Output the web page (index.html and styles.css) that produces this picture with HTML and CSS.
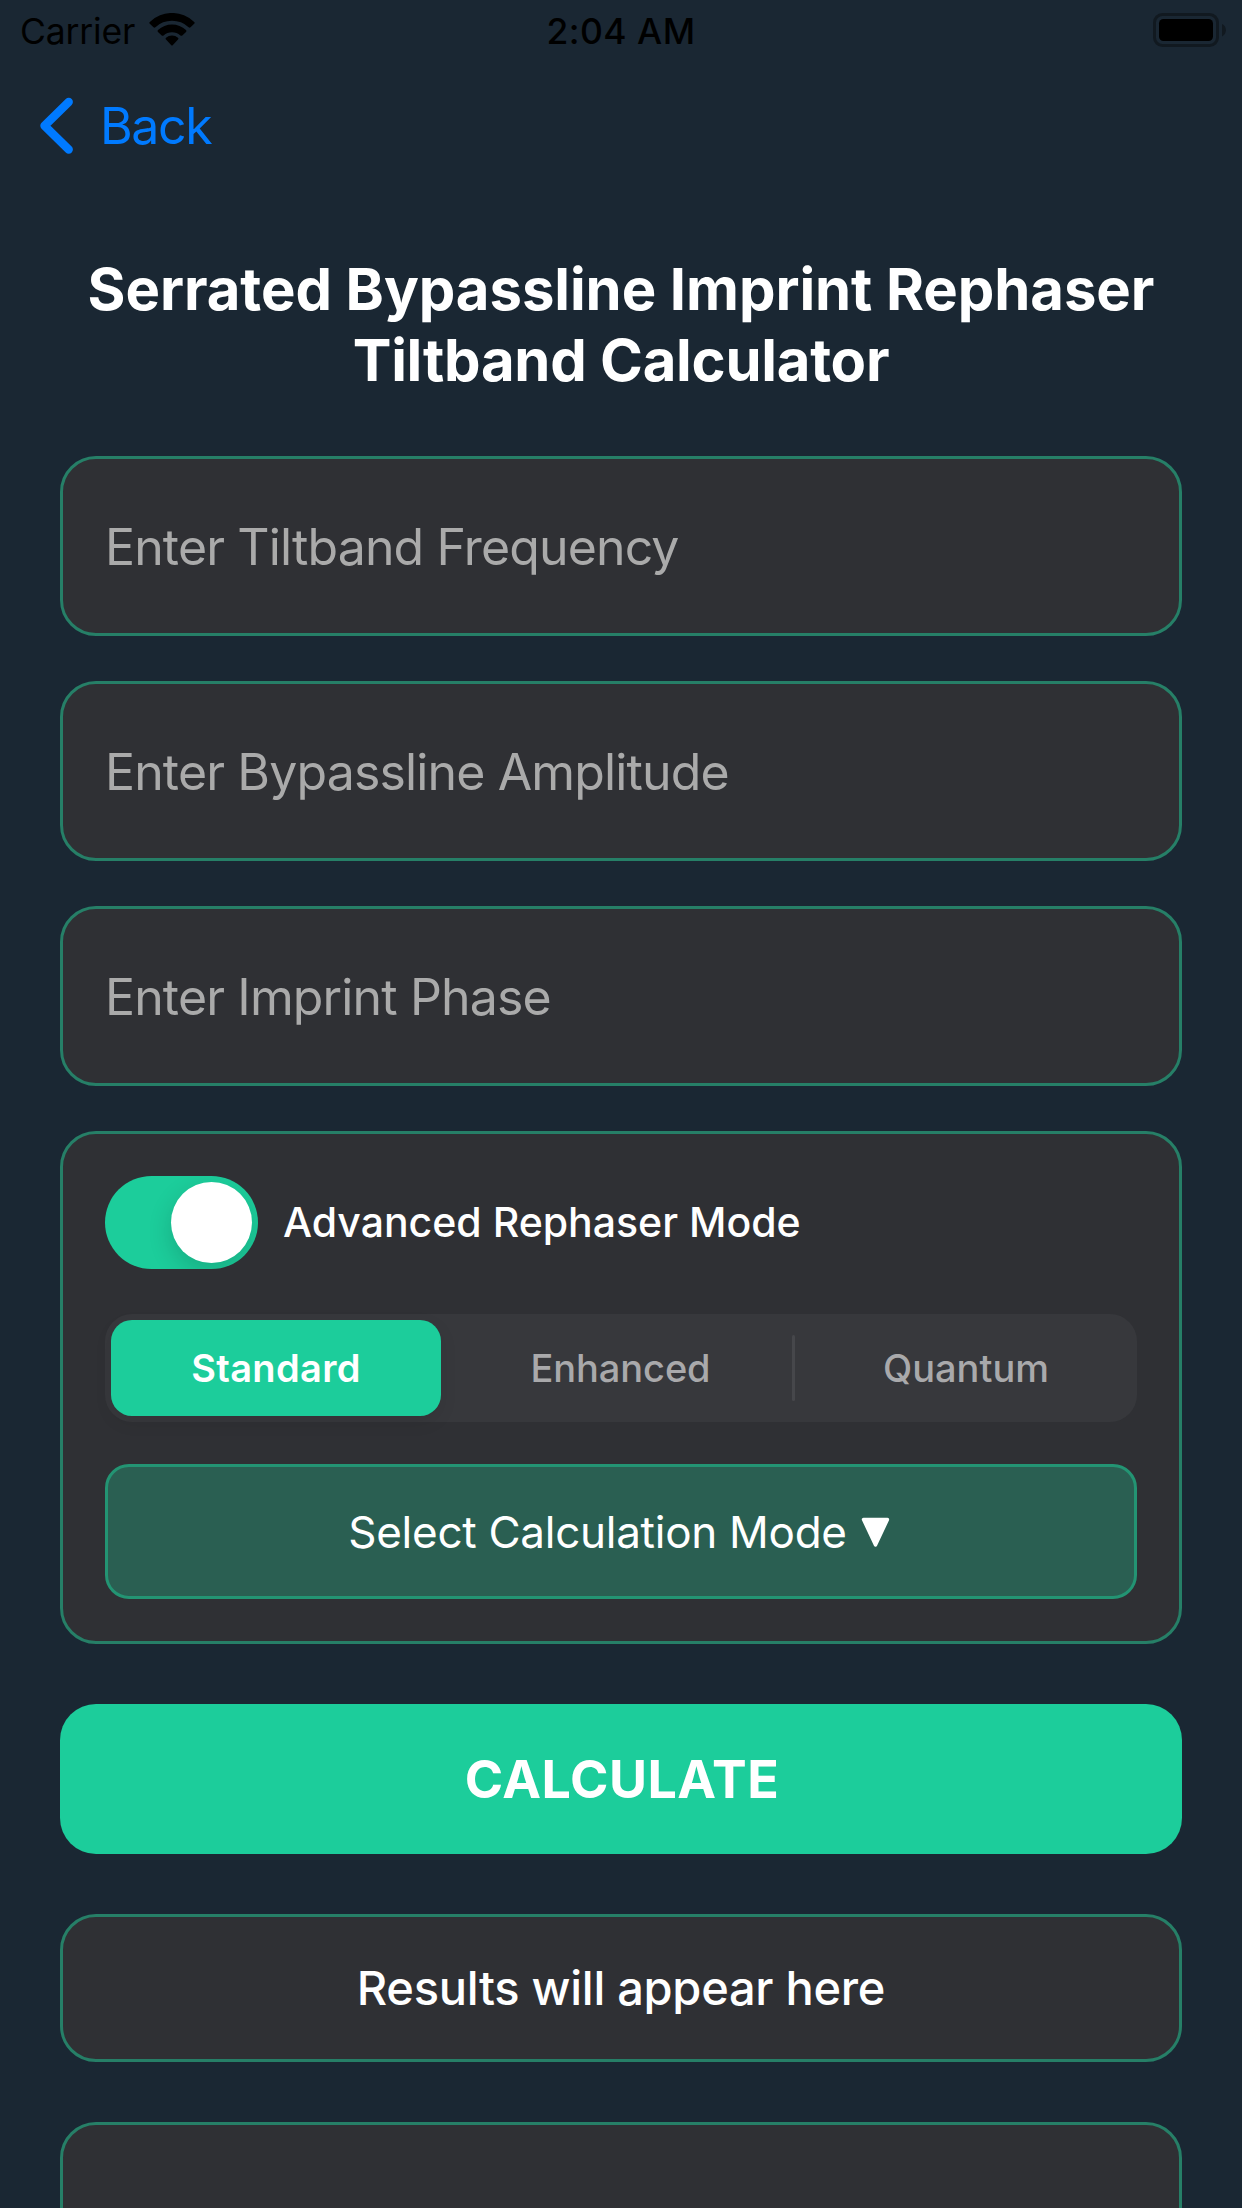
FILE: index.html
```html
<!DOCTYPE html>
<html lang="en">
<head>
<meta charset="utf-8">
<title>Tiltband Calculator</title>
<link rel="stylesheet" href="styles.css">
</head>
<body>
<div class="screen">
  <header class="status-bar">
    <div class="status-left">
      <span class="carrier">Carrier</span>
      <svg class="wifi" width="46" height="34" viewBox="0 0 46 34">
        <path d="M0.8 10.8a1.3 1.3 0 0 1 0-1.9A32 32 0 0 1 45.2 8.900a1.300 1.300 0 0 1 0 1.900L41.500 14.300a1.400 1.400 0 0 1-1.900 0A24 24 0 0 0 6.400 14.300a1.400 1.400 0 0 1-1.900 0Z"/>
        <path d="M9 18.900a1.300 1.300 0 0 1 0-1.900A20.500 20.500 0 0 1 37 17a1.300 1.300 0 0 1 0 1.900L33.300 22.400a1.400 1.400 0 0 1-1.900 0A12.500 12.500 0 0 0 14.600 22.400a1.400 1.400 0 0 1-1.900 0Z"/>
        <path d="M17 26.600a1.200 1.200 0 0 1 0-1.800A9 9 0 0 1 29 24.800a1.200 1.200 0 0 1 0 1.800L23.700 32.200a1 1 0 0 1-1.400 0Z"/>
      </svg>
    </div>
    <span class="clock">2:04 AM</span>
    <svg class="battery" width="74" height="34" viewBox="0 0 74 34">
      <rect x="1.500" y="1.500" width="63" height="31" rx="8" fill="none" stroke="#111920" stroke-width="3"/>
      <rect x="6" y="6" width="54" height="22" rx="4.500"/>
      <path d="M69 11c5.200 2.400 5.200 10 0 12.400Z" fill="#111920"/>
    </svg>
  </header>

  <nav class="nav">
    <svg class="chevron" width="34" height="58" viewBox="0 0 34 58">
      <path d="M28.700 5 4.500 28.800 28.700 52.600" fill="none" stroke="#007aff" stroke-width="8.400" stroke-linecap="round" stroke-linejoin="round"/>
    </svg>
    <span class="back">Back</span>
  </nav>

  <main class="content">
    <h1 class="title">Serrated Bypassline Imprint Rephaser<br><span class="title-tail">Tiltband Calculator</span></h1>

    <div class="fields">
      <div class="card field">Enter Tiltband Frequency</div>
      <div class="card field">Enter Bypassline Amplitude</div>
      <div class="card field">Enter Imprint Phase</div>
    </div>

    <section class="card options">
      <div class="mode-row">
        <span class="switch"><span class="knob"></span></span>
        <span class="mode-label">Advanced Rephaser Mode</span>
      </div>
      <div class="segments">
        <span class="segment selected">Standard</span>
        <span class="segment middle">Enhanced</span>
        <span class="divider"></span>
        <span class="segment">Quantum</span>
      </div>
      <div class="select">
        <span>Select Calculation Mode</span>
        <svg width="29" height="30" viewBox="0 0 29 30">
          <path d="M2.500 2.500H26.500L14.500 28Z" fill="#fff" stroke="#fff" stroke-width="3.400" stroke-linejoin="round"/>
        </svg>
      </div>
    </section>

    <div class="calculate">CALCULATE</div>
    <div class="card results">Results will appear here</div>
    <div class="card history"></div>
  </main>
</div>
</body>
</html>
```
FILE: styles.css
```css
* {
  box-sizing: border-box;
}

body {
  margin: 0;
  background: #1a2733;
  font-family: Inter, "Liberation Sans", sans-serif;
  color: #fff;
}

svg {
  display: block;
  flex: none;
}

.screen {
  width: 1242px;
  height: 2208px;
  overflow: hidden;
}

.status-bar {
  display: grid;
  grid-template-columns: 1fr auto 1fr;
  align-items: center;
  height: 62px;
  padding: 0 15px 0 20px;
  color: #000;
  font-size: 35.5px;
}

.status-left {
  display: flex;
  align-items: center;
  gap: 14px;
}

.carrier {
  letter-spacing: -0.17px;
}

.wifi {
  margin-bottom: 3px;
}

.clock {
  font-weight: 500;
  letter-spacing: 0.45px;
  margin-left: -5px;
}

.battery {
  justify-self: end;
  margin-bottom: 2px;
}

.nav {
  display: flex;
  align-items: center;
  gap: 26px;
  height: 128px;
  padding-left: 40px;
}

.back {
  color: #007aff;
  font-size: 50px;
  letter-spacing: -1.35px;
}

.content {
  display: flex;
  flex-direction: column;
  padding: 64px 60px 0;
}

.title {
  margin: 0;
  font-size: 58px;
  line-height: 71px;
  font-weight: 700;
  letter-spacing: -0.06px;
  text-align: center;
  white-space: nowrap;
}

.title-tail {
  letter-spacing: -0.25px;
}

.card {
  background: #2f3034;
  border: 3px solid #267f67;
  border-radius: 36px;
}

.fields {
  display: flex;
  flex-direction: column;
  gap: 45px;
  margin-top: 60px;
}

.field {
  display: flex;
  align-items: center;
  height: 180px;
  padding: 2px 42px 0;
  color: #aaa;
  font-size: 50px;
  letter-spacing: -0.86px;
}

.options {
  display: flex;
  flex-direction: column;
  height: 513px;
  margin-top: 45px;
  padding: 42px;
}

.mode-row {
  display: flex;
  align-items: center;
  gap: 25px;
}

.switch {
  display: flex;
  justify-content: flex-end;
  width: 153px;
  height: 93px;
  padding: 6px;
  border-radius: 47px;
  background: #1ccd9b;
  overflow: hidden;
}

.knob {
  width: 81px;
  height: 81px;
  border-radius: 50%;
  background: #fff;
  box-shadow: 0 9px 24px rgba(0, 0, 0, 0.16);
}

.mode-label {
  padding-bottom: 2px;
  font-size: 41px;
  font-weight: 500;
}

.segments {
  display: grid;
  grid-template-columns: 330px 351px 3px 342px;
  align-items: center;
  height: 108px;
  margin-top: 45px;
  padding: 6px 0 6px 6px;
  border-radius: 27px;
  background: #37383c;
}

.segment {
  font-size: 38px;
  font-weight: 500;
  color: #a9a9ab;
  text-align: center;
}

.segment.middle {
  padding-left: 8px;
  letter-spacing: -0.1px;
}

.segment.selected {
  height: 96px;
  border-radius: 21px;
  background: #1ccd9b;
  color: #fff;
  font-weight: 600;
  line-height: 96px;
  letter-spacing: 0.35px;
  box-shadow: 0 6px 18px rgba(0, 0, 0, 0.08);
}

.divider {
  height: 66px;
  border-radius: 2px;
  background: #46474b;
}

.select {
  display: flex;
  align-items: center;
  justify-content: center;
  gap: 14px;
  height: 135px;
  margin-top: 42px;
  padding-right: 4px;
  border: 3px solid #239473;
  border-radius: 24px;
  background: #2a5f52;
  font-size: 44px;
  letter-spacing: -0.27px;
}

.calculate {
  height: 150px;
  margin-top: 60px;
  padding-left: 2px;
  border-radius: 36px;
  background: #1ccd9b;
  font-size: 52px;
  font-weight: 700;
  line-height: 152px;
  letter-spacing: 0.5px;
  text-align: center;
}

.results {
  height: 148px;
  margin-top: 60px;
  font-size: 47px;
  font-weight: 500;
  line-height: 142px;
  letter-spacing: -0.28px;
  text-align: center;
}

.history {
  height: 180px;
  margin-top: 60px;
}
```
